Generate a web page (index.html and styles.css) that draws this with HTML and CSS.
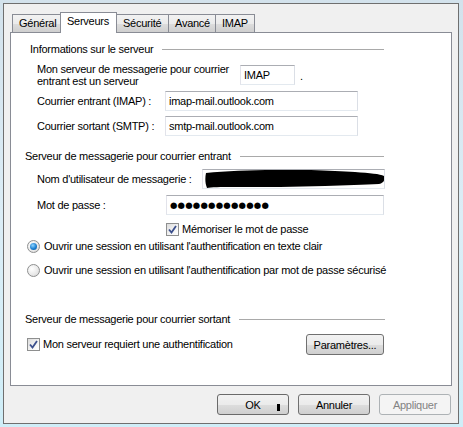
FILE: index.html
```html
<!DOCTYPE html>
<html lang="fr">
<head>
<meta charset="utf-8">
<title>Paramètres de messagerie</title>
<link rel="stylesheet" href="styles.css">
</head>
<body>
<div class="dialog">
  <div class="tabs">
    <div class="tab">Général</div>
    <div class="tab active">Serveurs</div>
    <div class="tab">Sécurité</div>
    <div class="tab">Avancé</div>
    <div class="tab">IMAP</div>
  </div>
  <div class="panel">
    <div class="head head-first"><span>Informations sur le serveur</span><i class="rule"></i></div>

    <div class="row row-type">
      <div class="label label-type">Mon serveur de messagerie pour courrier<br>entrant est un serveur</div>
      <div class="field field-type">IMAP</div>
      <span class="dot">.</span>
    </div>

    <div class="row row-in">
      <div class="label label-srv">Courrier entrant (IMAP) :</div>
      <div class="field field-srv">imap-mail.outlook.com</div>
    </div>

    <div class="row row-out">
      <div class="label label-srv">Courrier sortant (SMTP) :</div>
      <div class="field field-srv">smtp-mail.outlook.com</div>
    </div>

    <div class="head head-in"><span>Serveur de messagerie pour courrier entrant</span><i class="rule"></i></div>

    <div class="row row-user">
      <div class="label label-user">Nom d'utilisateur de messagerie :</div>
      <div class="field field-user">
        <svg class="redact" width="180" height="18" viewBox="0 0 180 18">
          <path d="M1 3 C20 1 45 0 70 0 C100 -1 130 1 150 2 C165 3 175 4 179 6 C180 10 179 13 174 14 C160 15 140 15 120 16 C90 17 60 17 30 17 C15 17 6 17 2 18 C0 13 0 8 1 3 Z" fill="#000"/>
        </svg>
      </div>
    </div>

    <div class="row row-pass">
      <div class="label label-pass">Mot de passe :</div>
      <div class="field field-pass">●●●●●●●●●●●●●</div>
    </div>

    <div class="row row-remember">
      <span class="check checked"><svg width="9" height="9" viewBox="0 0 9 9"><path d="M1 4.5 L3.5 7.5 L8 1" fill="none" stroke="#3b4f8c" stroke-width="1.8"/></svg></span>
      <span class="opt">Mémoriser le mot de passe</span>
    </div>

    <div class="row row-radio1">
      <span class="radio on"><span class="radio-dot"></span></span>
      <span class="opt">Ouvrir une session en utilisant l'authentification en texte clair</span>
    </div>

    <div class="row row-radio2">
      <span class="radio"></span>
      <span class="opt">Ouvrir une session en utilisant l'authentification par mot de passe sécurisé</span>
    </div>

    <div class="head head-out"><span>Serveur de messagerie pour courrier sortant</span><i class="rule"></i></div>

    <div class="row row-auth">
      <span class="check checked"><svg width="9" height="9" viewBox="0 0 9 9"><path d="M1 4.5 L3.5 7.5 L8 1" fill="none" stroke="#3b4f8c" stroke-width="1.8"/></svg></span>
      <span class="opt opt-auth">Mon serveur requiert une authentification</span>
      <button class="btn btn-params">Paramètres...</button>
    </div>
  </div>

  <div class="actions">
    <button class="btn btn-main default">OK<span class="caret"></span></button>
    <button class="btn btn-main">Annuler</button>
    <button class="btn btn-main disabled">Appliquer</button>
  </div>
</div>
</body>
</html>
```

FILE: styles.css
```css
html, body {
  margin: 0;
  padding: 0;
}
body {
  width: 463px;
  height: 427px;
  overflow: hidden;
  background: linear-gradient(180deg, #d3e2ec 0%, #dcedf6 50%, #cfeef8 100%);
  font-family: Tahoma, "Liberation Sans", Arial, sans-serif;
  font-size: 11px;
  letter-spacing: -0.25px;
  color: #000;
  padding: 3px 0 0 3px;
  box-sizing: border-box;
}
.dialog {
  width: 456px;
  height: 421px;
  box-sizing: border-box;
  border: 1px solid #6f6f6f;
  background: #f0f0f0;
  padding: 8px 0 0 6px;
}
.tabs {
  display: flex;
  height: 20px;
  align-items: flex-end;
  padding-left: 2px;
  position: relative;
  z-index: 1;
}
.tab {
  height: 18px;
  box-sizing: border-box;
  border: 1px solid #898c95;
  border-bottom: none;
  background: linear-gradient(180deg, #f2f2f2 0%, #ebebeb 50%, #dddddd 51%, #cfcfcf 100%);
  line-height: 17px;
  padding: 0 6px;
  margin-right: -1px;
  margin-bottom: 0;
}
.tab:nth-child(1) { width: 49px; }
.tab:nth-child(3) { width: 53px; }
.tab:nth-child(4) { width: 48px; }
.tab:nth-child(5) { width: 40px; }
.tab.active {
  height: 21px;
  width: 57px;
  background: #fff;
  margin-bottom: -1px;
  line-height: 17px;
  padding-left: 6px;
  position: relative;
  z-index: 2;
}
.panel {
  width: 442px;
  height: 354px;
  box-sizing: border-box;
  border: 1px solid #898c95;
  background: #fff;
  display: flex;
  flex-direction: column;
}
.head {
  display: flex;
  align-items: center;
  height: 13px;
  line-height: 13px;
  padding-right: 67px;
}
.head span { white-space: nowrap; }
.rule {
  flex: 1;
  height: 0;
  border-top: 1px solid #a9a9a9;
  margin-left: 9px;
}
.head-first { margin-top: 10px; padding-left: 19px; }
.head-in { margin-top: 14px; padding-left: 14px; }
.head-out { margin-top: 36px; padding-left: 14px; padding-right: 66px; }

.row {
  display: flex;
  align-items: center;
  padding-left: 26px;
  white-space: nowrap;
}
.label { line-height: 12px; }
.field {
  height: 20px;
  box-sizing: border-box;
  border: 1px solid #abadb3;
  border-left-color: #e2e3ea;
  border-right-color: #dbdfe6;
  border-bottom-color: #e3e9ef;
  background: #fff;
  line-height: 18px;
  padding-left: 3px;
  overflow: hidden;
}
.row-type { margin-top: 7px; height: 24px; align-items: flex-start; }
.label-type { width: 203px; }
.field-type { width: 55px; margin-top: 2px; }
.dot { margin-left: 5px; margin-top: 7px; }
.row-in { margin-top: 4px; height: 20px; }
.row-out { margin-top: 5px; height: 20px; }
.label-srv { width: 128px; }
.field-srv { width: 193px; }
.row-user { margin-top: 6px; height: 20px; }
.label-user { width: 165px; }
.field-user { width: 183px; padding: 0 0 0 2px; }
.redact { display: block; }
.row-pass { margin-top: 6px; height: 20px; }
.label-pass { width: 129px; }
.field-pass { width: 218px; font-size: 8.5px; letter-spacing: 0.2px; padding-left: 3px; font-family: "DejaVu Sans", sans-serif; }

.check {
  width: 13px;
  height: 13px;
  box-sizing: border-box;
  border: 1px solid #8e8f8f;
  background: linear-gradient(135deg, #dcdcdc 0%, #f4f4f4 60%, #fff 100%);
  display: flex;
  align-items: center;
  justify-content: center;
  flex: none;
}
.check svg { display: block; }
.opt { margin-left: 3px; line-height: 13px; }
.row-remember { margin-top: 7px; height: 14px; padding-left: 155px; }
.row-radio1 { margin-top: 3px; height: 14px; padding-left: 16px; }
.row-radio2 { margin-top: 10px; height: 14px; padding-left: 16px; }
.radio {
  width: 13px;
  height: 13px;
  box-sizing: border-box;
  border-radius: 50%;
  border: 1px solid #8e8f8f;
  background: radial-gradient(circle at 35% 35%, #ffffff 0%, #e8e8e8 60%, #d0d0d0 100%);
  display: flex;
  align-items: center;
  justify-content: center;
  flex: none;
}
.radio-dot {
  width: 7px;
  height: 7px;
  border-radius: 50%;
  background: radial-gradient(circle at 40% 35%, #8fd5ff 0%, #1b7fd1 55%, #0b4f8f 100%);
}
.row-radio1 .opt, .row-radio2 .opt { margin-left: 4px; }
.row-auth { margin-top: 8px; height: 21px; padding-left: 16px; }
.opt-auth { width: 260px; }

.btn {
  font-family: inherit;
  font-size: 11px;
  letter-spacing: -0.25px;
  color: #000;
  height: 21px;
  box-sizing: border-box;
  border: 1px solid #707070;
  border-radius: 3px;
  background: linear-gradient(180deg, #f2f2f2 0%, #ebebeb 50%, #dddddd 51%, #cfcfcf 100%);
  padding: 0;
  margin: 0;
  line-height: 18px;
}
.btn-params { width: 78px; margin-left: 3px; }
.actions {
  display: flex;
  justify-content: flex-end;
  gap: 9px;
  margin-top: 8px;
  padding-right: 7px;
}
.btn-main { width: 72px; position: relative; }
.btn-main.default { border-color: #6a6a6a; }
.caret {
  position: absolute;
  left: 59px;
  top: 9px;
  width: 3px;
  height: 7px;
  background: #000;
}
.btn-main.disabled {
  color: #838383;
  border-color: #adb2b5;
  background: #f4f4f4;
}
```
